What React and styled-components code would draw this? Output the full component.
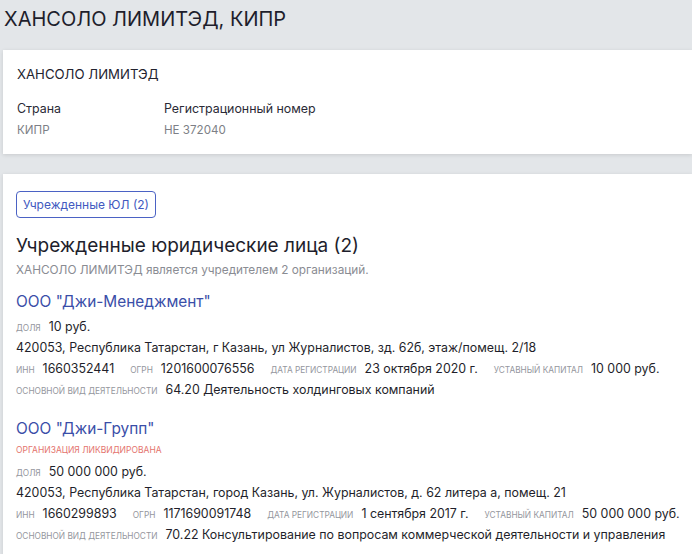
import styled, { createGlobalStyle } from "styled-components"

const Global = createGlobalStyle`
  html, body {
    margin: 0;
    padding: 0;
    background: #e3e6e9;
    font-family: Inter, "Noto Sans", sans-serif;
    color: #23232f;
  }
`

const Page = styled.div`
  padding: 0 0 0 3px;
  overflow: hidden;
  height: 554px;
`

const Title = styled.h1`
  margin: 0;
  padding: 6px 0 0 1px;
  height: 50px;
  box-sizing: border-box;
  font-size: 20px;
  line-height: 26px;
  font-weight: 400;
  color: #1e1e2c;
`

const Card = styled.div`
  background: #fff;
  box-shadow: 0 1px 4px rgba(0, 0, 0, 0.12);
  padding: ${(p) => p.$pad};
  margin-bottom: 20px;
`

const OrgName = styled.div`
  font-size: 13.2px;
  line-height: 16px;
  margin-bottom: 19px;
`

const Fields = styled.div`
  display: flex;
`

const Field = styled.div`
  width: ${(p) => p.$w}px;
  display: flex;
  flex-direction: column;
  gap: 5px;
`

const FieldLabel = styled.div`
  font-size: 12.4px;
  line-height: 16px;
  color: #2a2a36;
`

const FieldValue = styled.div`
  font-size: 11.6px;
  line-height: 16px;
  color: #7d7f86;
`

const TabButton = styled.button`
  display: block;
  font-family: inherit;
  font-size: 12px;
  color: #4259c0;
  background: #fff;
  border: 1px solid #4b62c4;
  border-radius: 4px;
  height: 27px;
  padding: 0 6px;
  cursor: pointer;
`

const SectionTitle = styled.h2`
  margin: 16px 0 0;
  font-size: 19px;
  line-height: 24px;
  font-weight: 400;
  color: #1e1e2c;
`

const SectionSub = styled.div`
  font-size: 11.8px;
  line-height: 16px;
  color: #8a8c93;
  margin-top: 4px;
`

const Company = styled.div`
  margin-top: ${(p) => p.$top}px;
  display: flex;
  flex-direction: column;
`

const CompanyLink = styled.a`
  font-size: 15.4px;
  line-height: 22px;
  color: #3a4ea8;
  text-decoration: none;
  margin-bottom: 3px;
`

const Status = styled.div`
  font-size: 8.5px;
  line-height: 21px;
  color: #e4746e;
  text-transform: uppercase;
  margin-top: -3px;
`

const Line = styled.div`
  display: flex;
  align-items: baseline;
  font-size: 12.4px;
  line-height: 21px;
  height: 21px;
  color: #1f1f2b;
  white-space: nowrap;
`

const Item = styled.span`
  display: inline-flex;
  align-items: baseline;
  margin-right: ${(p) => p.$gap || 0}px;
`

const Label = styled.span`
  font-size: 8.3px;
  color: #94969d;
  text-transform: uppercase;
  margin-right: 8px;
`

const companies = [
  {
    name: 'ООО "Джи-Менеджмент"',
    share: "10 руб.",
    address: "420053, Республика Татарстан, г Казань, ул Журналистов, зд. 62б, этаж/помещ. 2/18",
    inn: "1660352441",
    ogrn: "1201600076556",
    date: "23 октября 2020 г.",
    capital: "10 000 руб.",
    activity: "64.20 Деятельность холдинговых компаний",
  },
  {
    name: 'ООО "Джи-Групп"',
    liquidated: true,
    share: "50 000 000 руб.",
    address: "420053, Республика Татарстан, город Казань, ул. Журналистов, д. 62 литера а, помещ. 21",
    inn: "1660299893",
    ogrn: "1171690091748",
    date: "1 сентября 2017 г.",
    capital: "50 000 000 руб.",
    activity: "70.22 Консультирование по вопросам коммерческой деятельности и управления",
  },
]

const App = () => {
  return (
    <Page>
      <Global />
      <Title>ХАНСОЛО ЛИМИТЭД, КИПР</Title>
      <Card $pad="16px 14px 16px">
        <OrgName>ХАНСОЛО ЛИМИТЭД</OrgName>
        <Fields>
          <Field $w={147}>
            <FieldLabel>Страна</FieldLabel>
            <FieldValue>КИПР</FieldValue>
          </Field>
          <Field $w={200}>
            <FieldLabel>Регистрационный номер</FieldLabel>
            <FieldValue>НЕ 372040</FieldValue>
          </Field>
        </Fields>
      </Card>
      <Card $pad="17px 13px 20px">
        <TabButton>Учрежденные ЮЛ (2)</TabButton>
        <SectionTitle>Учрежденные юридические лица (2)</SectionTitle>
        <SectionSub>ХАНСОЛО ЛИМИТЭД является учредителем 2 организаций.</SectionSub>
        {companies.map((c, i) => (
          <Company key={c.inn} $top={i === 0 ? 13 : 18}>
            <CompanyLink href="#">{c.name}</CompanyLink>
            {c.liquidated && <Status>Организация ликвидирована</Status>}
            <Line>
              <Label>доля</Label>
              {c.share}
            </Line>
            <Line>{c.address}</Line>
            <Line>
              <Item $gap={16}>
                <Label>инн</Label>
                {c.inn}
              </Item>
              <Item $gap={16}>
                <Label>огрн</Label>
                {c.ogrn}
              </Item>
              <Item $gap={16}>
                <Label>дата регистрации</Label>
                {c.date}
              </Item>
              <Item>
                <Label>уставный капитал</Label>
                {c.capital}
              </Item>
            </Line>
            <Line>
              <Label>основной вид деятельности</Label>
              {c.activity}
            </Line>
          </Company>
        ))}
      </Card>
    </Page>
  )
}

export default App
